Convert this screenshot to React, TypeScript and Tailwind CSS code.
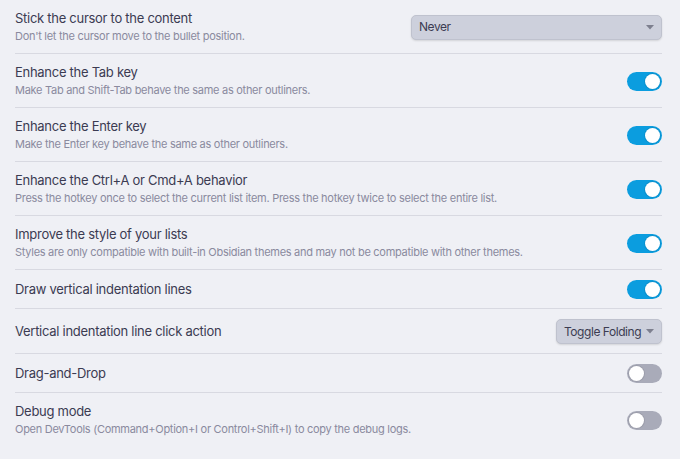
import React from "react";

type Row = {
  title: string;
  desc?: string;
  control: "on" | "off" | "selectWide" | "selectSmall";
  value?: string;
};

const rows: Row[] = [
  { title: "Stick the cursor to the content", desc: "Don't let the cursor move to the bullet position.", control: "selectWide", value: "Never" },
  { title: "Enhance the Tab key", desc: "Make Tab and Shift-Tab behave the same as other outliners.", control: "on" },
  { title: "Enhance the Enter key", desc: "Make the Enter key behave the same as other outliners.", control: "on" },
  { title: "Enhance the Ctrl+A or Cmd+A behavior", desc: "Press the hotkey once to select the current list item. Press the hotkey twice to select the entire list.", control: "on" },
  { title: "Improve the style of your lists", desc: "Styles are only compatible with built-in Obsidian themes and may not be compatible with other themes.", control: "on" },
  { title: "Draw vertical indentation lines", control: "on" },
  { title: "Vertical indentation line click action", control: "selectSmall", value: "Toggle Folding" },
  { title: "Drag-and-Drop", control: "off" },
  { title: "Debug mode", desc: "Open DevTools (Command+Option+I or Control+Shift+I) to copy the debug logs.", control: "off" },
];

function Toggle({ on }: { on: boolean }) {
  return (
    <div
      className={
        "relative w-[35px] h-[19px] rounded-full shrink-0 " +
        (on ? "bg-[#0b9ddf]" : "bg-[#a9abb9]")
      }
    >
      <div
        className={
          "absolute top-[2px] w-[15px] h-[15px] rounded-full bg-white shadow-[0_0_0_1px_rgba(0,0,0,0.08)] " +
          (on ? "right-[2px]" : "left-[2px]")
        }
      />
    </div>
  );
}

function Select({ value, wide }: { value: string; wide: boolean }) {
  return (
    <div
      className={
        "flex items-center justify-between shrink-0 whitespace-nowrap h-[25px] rounded-[5px] bg-[#cdd0dc] border border-[#bfc2ce] shadow-[0_1px_2px_rgba(0,0,0,0.12)] pl-[7px] pr-[7px] text-[12px] tracking-[-0.45px] text-[#3c3c52] " +
        (wide ? "w-[251px]" : "w-[106px] gap-[5px]")
      }
    >
      <span>{value}</span>
      <svg width="8" height="5" viewBox="0 0 8 5" className="shrink-0">
        <path d="M0 0 L8 0 L4 4.5 Z" fill="#7d7f8e" />
      </svg>
    </div>
  );
}

export default function App() {
  return (
    <div
      className="w-[680px] h-[459px] bg-[#eff0f5] overflow-hidden pl-[15px] pr-[18px]"
      style={{ fontFamily: "Inter, 'Noto Sans', sans-serif" }}
    >
      {rows.map((r, i) => (
        <div
          key={i}
          className={
            "flex items-center justify-between gap-4 pt-[10px] pb-[9px] " +
            (i > 0 ? "border-t border-[#d8d9e1]" : "")
          }
        >
          <div className="flex flex-col min-w-0">
            <div className="text-[13px] leading-[17px] tracking-[-0.28px] text-[#3b3b52]">{r.title}</div>
            {r.desc && (
              <div className="mt-[2px] text-[11px] leading-[15px] tracking-[-0.28px] text-[#8a8a9e]">{r.desc}</div>
            )}
          </div>
          {r.control === "on" && <Toggle on={true} />}
          {r.control === "off" && <Toggle on={false} />}
          {r.control === "selectWide" && <Select value={r.value!} wide={true} />}
          {r.control === "selectSmall" && <Select value={r.value!} wide={false} />}
        </div>
      ))}
    </div>
  );
}
